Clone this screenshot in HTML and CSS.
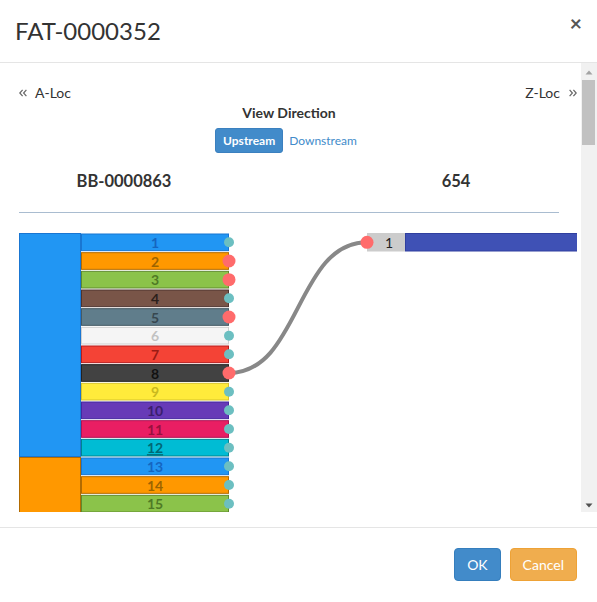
FILE: index.html
```html
<!DOCTYPE html>
<html lang="en">
<head>
<meta charset="utf-8">
<title>FAT-0000352</title>
<link rel="stylesheet" href="styles.css">
</head>
<body>
<div class="modal">
  <div class="modal-header">
    <h4 class="modal-title">FAT-0000352</h4>
    <button class="close" type="button">×</button>
  </div>
  <div class="modal-body">
    <div class="scroll-wrap">
      <div class="trace">
        <div class="loc-nav">
          <a class="loc">
            <svg class="chev" width="8" height="8" viewBox="0 0 8 8"><polyline points="3.6,0.8 0.8,4 3.6,7.2" /><polyline points="7.4,0.8 4.6,4 7.4,7.2" /></svg>
            <span>A-Loc</span>
          </a>
          <a class="loc loc-z">
            <span>Z-Loc</span>
            <svg class="chev" width="8" height="8" viewBox="0 0 8 8"><polyline points="0.6,0.8 3.4,4 0.6,7.2" /><polyline points="4.4,0.8 7.2,4 4.4,7.2" /></svg>
          </a>
        </div>
        <div class="direction">
          <div class="direction-label">View Direction</div>
          <div class="direction-toggle">
            <button class="btn-dir active" type="button">Upstream</button>
            <button class="btn-dir link" type="button">Downstream</button>
          </div>
        </div>
        <div class="endpoints">
          <div class="endpoint endpoint-a">BB-0000863</div>
          <div class="endpoint endpoint-z">654</div>
        </div>
        <hr class="divider">
        <svg id="diagram" class="diagram" width="558" height="279" viewBox="0 0 558 279"></svg>
      </div>
      <div class="scrollbar">
        <div class="sb-btn"><svg width="8" height="5" viewBox="0 0 8 5"><polygon points="4,0.5 7.5,4.5 0.5,4.5" fill="#a3a3a3"/></svg></div>
        <div class="sb-track"><div class="sb-thumb"></div></div>
        <div class="sb-btn sb-down"><svg width="8" height="5" viewBox="0 0 8 5"><polygon points="0.5,0.5 7.5,0.5 4,4.5" fill="#505050"/></svg></div>
      </div>
    </div>
  </div>
  <div class="modal-footer">
    <button class="btn btn-primary" type="button">OK</button>
    <button class="btn btn-warning" type="button">Cancel</button>
  </div>
</div>
<script src="app.js"></script>
</body>
</html>
```

FILE: styles.css
```css
* { box-sizing: border-box; }
html, body { margin: 0; padding: 0; background: #fff; }
body {
  font-family: Lato, "Noto Sans", "Liberation Sans", sans-serif;
  font-size: 14px;
  line-height: 20px;
  color: #333;
}
.modal {
  width: 597px;
  height: 602px;
  display: flex;
  flex-direction: column;
  overflow: hidden;
}
.modal-header {
  height: 63px;
  flex: 0 0 63px;
  border-bottom: 1px solid #e5e5e5;
  display: flex;
  justify-content: space-between;
  padding: 0 15px;
}
.modal-title {
  margin: 0;
  font-size: 24px;
  font-weight: 400;
  line-height: 62px;
  color: #333;
}
.close {
  align-self: flex-start;
  margin-top: 12px;
  padding: 0;
  border: 0;
  background: none;
  font-family: Lato, "Noto Sans", sans-serif;
  font-size: 21px;
  font-weight: 700;
  line-height: 22px;
  color: #555;
  cursor: pointer;
}
.modal-body {
  flex: 0 0 auto;
  padding: 0 0 15px 0;
}
.scroll-wrap {
  display: flex;
  height: 449px;
}
.trace {
  flex: 0 0 581px;
  height: 449px;
  overflow: hidden;
  padding: 20px 4px 0 19px;
}
.scrollbar {
  flex: 0 0 16px;
  display: flex;
  flex-direction: column;
  background: #f1f1f1;
}
.sb-btn {
  height: 15px;
  flex: 0 0 15px;
  display: flex;
  align-items: center;
  justify-content: center;
  padding-left: 0;
}
.sb-btn svg { display: block; margin-top: 4px; }
.sb-down svg { margin-top: 1px; }
.sb-track {
  flex: 1 1 auto;
  padding: 2px 2px 0 1px;
}
.sb-thumb {
  height: 65px;
  background: #c1c1c1;
}
.loc-nav {
  display: flex;
  justify-content: space-between;
  height: 20px;
}
.loc {
  display: inline-flex;
  align-items: center;
  gap: 8px;
  color: #333;
  text-decoration: none;
}
.loc-z { gap: 9px; }
.chev polyline {
  fill: none;
  stroke: #666;
  stroke-width: 1.2;
}
.direction {
  margin-right: 18px;
  text-align: center;
}
.direction-label {
  font-weight: 700;
  line-height: 20px;
}
.direction-toggle {
  margin-top: 5px;
  display: flex;
  justify-content: center;
}
.btn-dir {
  font-family: Lato, "Noto Sans", sans-serif;
  font-size: 12px;
  line-height: 15px;
  padding: 4px 7px;
  border: 1px solid transparent;
  border-radius: 3px;
  background: none;
  cursor: pointer;
}
.btn-dir.active {
  background: #428bca;
  border-color: #3b80bf;
  color: #fff;
  font-weight: 700;
}
.btn-dir.link {
  padding: 4px 5px;
  color: #428bca;
  font-weight: 400;
}
.endpoints {
  margin-top: 18px;
  display: flex;
  font-size: 16.5px;
  font-weight: 700;
  line-height: 20px;
  color: #333;
}
.endpoint-a {
  flex: 0 0 210px;
  text-align: center;
}
.endpoint-z {
  flex: 0 0 120px;
  margin-left: 167px;
  text-align: center;
}
.divider {
  margin: 21px 18px 0 0;
  border: 0;
  border-top: 1px solid #a9bcd0;
  height: 0;
}
.diagram {
  display: block;
  margin-top: 20px;
}
.fiber-num {
  font-family: Lato, "Noto Sans", sans-serif;
  font-size: 14px;
  font-weight: 700;
}
.port-num {
  font-family: Lato, "Noto Sans", sans-serif;
  font-size: 14px;
  font-weight: 400;
  fill: #222;
}
.modal-footer {
  flex: 1 1 auto;
  border-top: 1px solid #e5e5e5;
  padding: 20px;
  display: flex;
  justify-content: flex-end;
  align-items: flex-start;
  gap: 9px;
}
.btn {
  font-family: Lato, "Noto Sans", sans-serif;
  font-size: 14px;
  line-height: 19px;
  padding: 6px 12px;
  border: 1px solid transparent;
  border-radius: 4px;
  color: #fff;
  cursor: pointer;
}
.btn-primary { background: #428bca; border-color: #357ebd; }
.btn-warning { background: #f0ad4e; border-color: #eea236; }
```

FILE: app.js
```js
(function () {
  var NS = 'http://www.w3.org/2000/svg';
  var svg = document.getElementById('diagram');
  var H = 56 / 3;
  var TW = 62, FX = 62, FW = 148;
  var ROWS = 15;
  var colors = [
    { f: '#2196F3', s: '#1976D2', t: '#1565C0' },
    { f: '#FF9800', s: '#b36b00', t: '#9c6400' },
    { f: '#8BC34A', s: '#5f8a2e', t: '#4f7a25' },
    { f: '#795548', s: '#4e342e', t: '#2b1f1b' },
    { f: '#607D8B', s: '#455a64', t: '#37474f' },
    { f: '#F5F5F5', s: '#cfcfcf', t: '#c2c2c2' },
    { f: '#F44336', s: '#b71c1c', t: '#9b1b14' },
    { f: '#424242', s: '#222222', t: '#111111' },
    { f: '#FFEB3B', s: '#d4c22a', t: '#c9b81e' },
    { f: '#673AB7', s: '#4527a0', t: '#3b1f6e' },
    { f: '#E91E63', s: '#ad1457', t: '#99103f' },
    { f: '#00BCD4', s: '#00838f', t: '#006875' }
  ];
  function el(name, attrs, parent) {
    var e = document.createElementNS(NS, name);
    for (var k in attrs) e.setAttribute(k, attrs[k]);
    (parent || svg).appendChild(e);
    return e;
  }
  var gTubes = el('g', {});
  var gFibers = el('g', {});
  var gCable = el('g', {});
  var gDots = el('g', {});
  var t, i, c, y;
  for (t = 0; t < 2; t++) {
    c = colors[t];
    el('rect', { x: 0.5, y: t * 12 * H + 0.5, width: TW - 1, height: 12 * H - 1, fill: c.f, stroke: c.s }, gTubes);
  }
  var red = [1, 2, 4, 7];
  for (i = 0; i < ROWS; i++) {
    c = colors[i % 12];
    y = i * H;
    el('rect', { x: FX + 0.5, y: y + 1, width: FW - 1, height: H - 2, fill: c.f, stroke: c.s }, gFibers);
    var attrs = { x: FX + FW / 2, y: y + H / 2 + 5.5, 'text-anchor': 'middle', fill: c.t, 'class': 'fiber-num' };
    if (i === 11) attrs['text-decoration'] = 'underline';
    var tx = el('text', attrs, gFibers);
    tx.textContent = String(i + 1);
    var isRed = red.indexOf(i) >= 0;
    el('circle', { cx: 210, cy: y + H / 2, r: isRed ? 6.5 : 5, fill: isRed ? '#ff6b6b' : '#6cbfc1' }, gDots);
  }
  /* splitter port */
  el('rect', { x: 348, y: 0, width: 38, height: 18.5, fill: '#cccccc' }, gFibers);
  var pt = el('text', { x: 370, y: 14.5, 'text-anchor': 'middle', 'class': 'port-num' }, gFibers);
  pt.textContent = '1';
  el('rect', { x: 386.5, y: 0.5, width: 172, height: 17.5, fill: '#3F51B5', stroke: '#303F9F' }, gFibers);
  /* cable */
  var y8 = 7 * H + H / 2, yp = H / 2;
  el('path', { d: 'M210,' + y8 + ' C281,' + y8 + ' 277,' + yp + ' 348,' + yp, fill: 'none', stroke: '#888888', 'stroke-width': 4 }, gCable);
  el('circle', { cx: 348, cy: yp, r: 6.5, fill: '#ff6b6b' }, gDots);
})();
```
